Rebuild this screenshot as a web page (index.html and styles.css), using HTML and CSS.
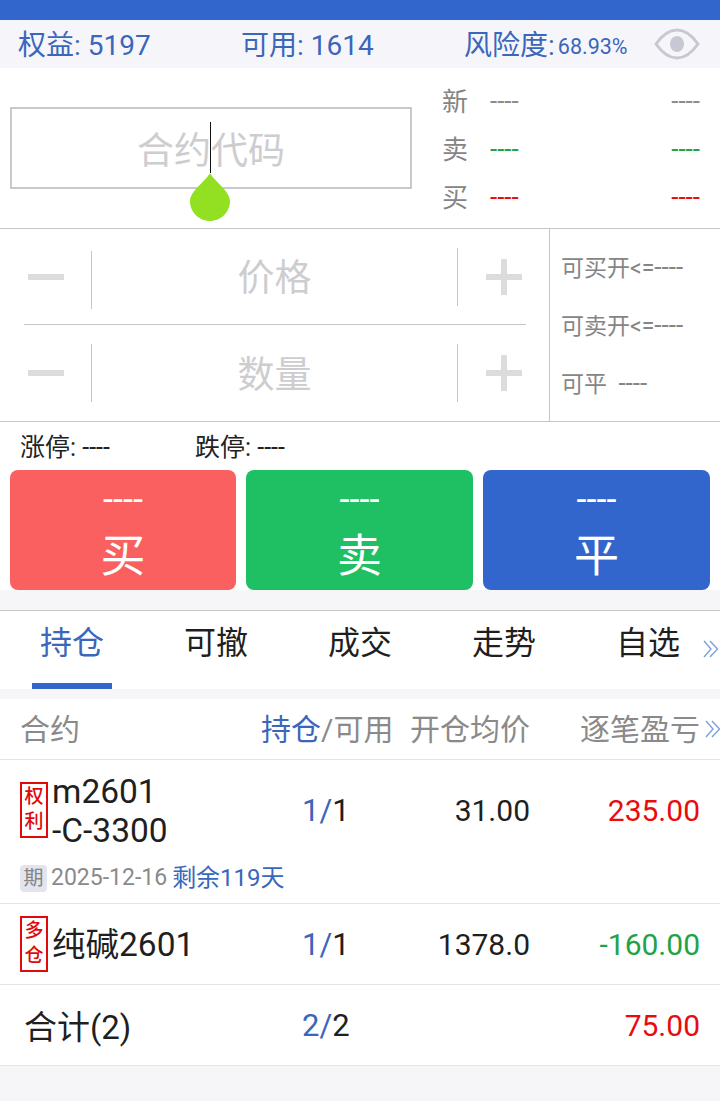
FILE: index.html
```html
<!DOCTYPE html>
<html lang="zh-CN">
<head>
    <meta charset="UTF-8">
    <title>交易</title>
    <link rel="stylesheet" href="styles.css">
</head>
<body>
    <div class="status-bar"></div>

    <div class="account-bar">
        <span class="acc-equity">权益: 5197</span>
        <span class="acc-free">可用: 1614</span>
        <span class="acc-risk">风险度:<small>68.93%</small></span>
        <svg class="eye" width="46" height="32" viewBox="0 0 46 32">
            <path d="M2 16 C9 6 15 2 23 2 C31 2 37 6 44 16 C37 26 31 30 23 30 C15 30 9 26 2 16 Z" fill="none" stroke="#c8c8d4" stroke-width="3"/>
            <ellipse cx="23" cy="16" rx="7" ry="8" fill="#c8c8d4"/>
        </svg>
    </div>

    <div class="quote-panel">
        <div class="code-wrap">
            <div class="code-box">合约代码</div>
            <div class="cursor"></div>
            <svg class="handle" width="40" height="48" viewBox="0 0 40 48">
                <path d="M20 0 C24 8 40 18 40 28 C40 39 31 48 20 48 C9 48 0 39 0 28 C0 18 16 8 20 0 Z" fill="#92e021"/>
            </svg>
        </div>
        <div class="quotes">
            <div class="quote-row"><span class="q-label">新</span><span class="q-val gray">----</span><span class="q-val gray">----</span></div>
            <div class="quote-row"><span class="q-label">卖</span><span class="q-val green">----</span><span class="q-val green">----</span></div>
            <div class="quote-row"><span class="q-label">买</span><span class="q-val red">----</span><span class="q-val red">----</span></div>
        </div>
    </div>

    <div class="order-panel">
        <div class="order-left">
            <div class="stepper first">
                <div class="step-btn"><span class="minus"></span></div>
                <div class="step-field">价格</div>
                <div class="step-btn"><span class="plus"></span></div>
            </div>
            <div class="stepper">
                <div class="step-btn"><span class="minus"></span></div>
                <div class="step-field">数量</div>
                <div class="step-btn"><span class="plus"></span></div>
            </div>
        </div>
        <div class="order-right">
            <div>可买开&lt;=<span class="dash">----</span></div>
            <div>可卖开&lt;=<span class="dash">----</span></div>
            <div>可平&nbsp; <span class="dash">----</span></div>
        </div>
    </div>

    <div class="limits">
        <span class="limit-up">涨停: ----</span>
        <span>跌停: ----</span>
    </div>

    <div class="actions">
        <div class="action buy"><span class="a-price">----</span><span class="a-name">买</span></div>
        <div class="action sell"><span class="a-price">----</span><span class="a-name">卖</span></div>
        <div class="action close"><span class="a-price">----</span><span class="a-name">平</span></div>
    </div>

    <div class="tabs">
        <div class="tab active">持仓</div>
        <div class="tab">可撤</div>
        <div class="tab">成交</div>
        <div class="tab">走势</div>
        <div class="tab">自选</div>
        <svg class="more" width="16" height="18" viewBox="0 0 16 18">
            <path d="M1 1 L8 9 L1 17 M7 1 L14.5 9 L7 17" fill="none" stroke="#7f9fdc" stroke-width="1.4"/>
        </svg>
    </div>

    <div class="table-head row-grid">
        <span class="col-name">合约</span>
        <span class="col-pos"><b>持仓</b>/可用</span>
        <span class="col-num">开仓均价</span>
        <span class="col-num">逐笔盈亏</span>
        <svg class="more head-more" width="16" height="18" viewBox="0 0 16 18">
            <path d="M1 1 L8 9 L1 17 M7 1 L14.5 9 L7 17" fill="none" stroke="#7f9fdc" stroke-width="1.4"/>
        </svg>
    </div>

    <div class="pos-row option-row">
        <div class="row-grid">
            <div class="name-cell">
                <span class="tag">权<br>利</span>
                <span class="name">m2601<br>-C-3300</span>
            </div>
            <span class="col-pos"><b>1/</b>1</span>
            <span class="col-num">31.00</span>
            <span class="col-num red">235.00</span>
        </div>
        <div class="expiry">
            <span class="qi">期</span>
            <span class="date">2025-12-16</span>
            <span class="left">剩余119天</span>
        </div>
    </div>

    <div class="pos-row plain-row row-grid">
        <div class="name-cell">
            <span class="tag">多<br>仓</span>
            <span class="name">纯碱2601</span>
        </div>
        <span class="col-pos"><b>1/</b>1</span>
        <span class="col-num">1378.0</span>
        <span class="col-num green">-160.00</span>
    </div>

    <div class="pos-row plain-row row-grid">
        <div class="name-cell total">合计(2)</div>
        <span class="col-pos"><b>2/</b>2</span>
        <span class="col-num"></span>
        <span class="col-num red">75.00</span>
    </div>
</body>
</html>
```

FILE: styles.css
```css
html, body {
    margin: 0;
    height: 100%;
}
body {
    font-family: Roboto, "Noto Sans CJK SC", sans-serif;
    background: #f6f6f8;
    color: #1f1f1f;
    width: 720px;
    height: 1101px;
    overflow: hidden;
}
.status-bar {
    height: 20px;
    background: #3366cc;
}

/* 账户信息 */
.account-bar {
    height: 46px;
    padding: 0 0 2px 18px;
    background: #f6f6fa;
    color: #3a66bb;
    font-size: 28px;
    display: flex;
    align-items: center;
    position: relative;
    white-space: nowrap;
}
.acc-equity { width: 223px; }
.acc-free { width: 223px; }
.acc-risk small {
    font-size: 21.5px;
    margin-left: 3px;
    vertical-align: 1px;
}
.eye { position: absolute; left: 654px; top: 8px; }

/* 合约代码 + 盘口 */
.quote-panel {
    height: 160px;
    background: #fff;
    border-bottom: 1px solid #c4c6ca;
    display: flex;
}
.code-wrap {
    width: 442px;
    padding: 39px 0 0 10px;
    box-sizing: border-box;
    position: relative;
}
.code-box {
    width: 402px;
    height: 82px;
    box-sizing: border-box;
    border: 2px solid #c8c9cc;
    color: #cdcdd0;
    font-size: 37px;
    line-height: 86px;
    text-align: center;
}
.cursor {
    position: absolute;
    left: 210px;
    top: 54px;
    width: 1px;
    height: 51px;
    background: #111;
}
.handle {
    position: absolute;
    left: 190px;
    top: 105px;
}
.quotes {
    flex: 1;
    padding: 7px 20px 0 0;
}
.quote-row {
    height: 48px;
    display: flex;
    align-items: center;
    font-size: 26px;
}
.q-label {
    color: #858585;
    width: 48px;
}
.q-val {
    font-size: 26px;
    flex: 1;
    padding-top: 3px;
}
.q-val + .q-val { text-align: right; }
.gray { color: #8c8c8c; }
.green { color: #1fa345; }
.red { color: #e80c0c; }

/* 价格 数量 */
.order-panel {
    height: 192px;
    background: #fff;
    border-bottom: 1px solid #c4c6ca;
    display: flex;
}
.order-left {
    width: 549px;
    padding: 0 23px 0 24px;
    box-sizing: border-box;
}
.stepper {
    height: 96px;
    display: flex;
    align-items: center;
}
.stepper.first {
    height: 95px;
    border-bottom: 1px solid #c4c6ca;
}
.step-btn {
    height: 58px;
    box-sizing: border-box;
    display: flex;
    align-items: center;
}
.step-btn:first-child {
    padding-left: 4px;
    width: 68px;
    border-right: 1px solid #c4c6ca;
}
.step-btn:last-child {
    width: 69px;
    border-left: 1px solid #c4c6ca;
    padding-left: 28px;
}
.first .step-btn:first-child {
    margin-top: 6px;
}
.first .minus {
    margin-bottom: 6px;
}
.first .step-btn:last-child {
    margin-top: 1px;
}
.step-field {
    flex: 1;
    text-align: center;
    color: #cdcdd0;
    font-size: 37px;
    line-height: 50px;
    padding-top: 6px;
}
.first .step-field {
    padding-top: 4px;
}
.minus, .plus {
    display: block;
    width: 36px;
    height: 6px;
    background: #dcdcdc;
    position: relative;
}
.plus::after {
    content: "";
    position: absolute;
    left: 15px;
    top: -15px;
    width: 6px;
    height: 36px;
    background: #dcdcdc;
}
.order-right {
    flex: 1;
    border-left: 1px solid #c4c6ca;
    padding: 10px 0 13px 11px;
    display: flex;
    flex-direction: column;
    justify-content: space-between;
    color: #858585;
    font-size: 23px;
    line-height: 56px;
    white-space: nowrap;
}
.dash { font-size: 26px; }

/* 涨跌停 */
.limits {
    height: 46px;
    background: #fff;
    font-size: 25px;
    color: #222;
    display: flex;
    align-items: center;
    padding: 0 0 2px 20px;
}
.limit-up { width: 175px; }

/* 买卖平 */
.actions {
    height: 120px;
    background: #fff;
    padding: 0 10px;
    display: flex;
    gap: 10px;
}
.action {
    flex: 1;
    border-radius: 8px;
    color: #fff;
    display: flex;
    flex-direction: column;
    align-items: center;
}
.buy { flex: none; width: 226px; background: #fa6060; }
.sell { background: #1fc063; }
.close { background: #3366cc; }
.a-price {
    font-size: 36px;
    line-height: 30px;
    margin-top: 15px;
}
.a-name {
    font-size: 45px;
    line-height: 60px;
    margin-top: 12px;
}

/* tab */
.tabs {
    margin-top: 20px;
    height: 78px;
    background: #fff;
    border-top: 1px solid #c8c9cc;
    display: flex;
    position: relative;
}
.tab {
    width: 144px;
    text-align: center;
    font-size: 32px;
    line-height: 64px;
    box-sizing: border-box;
    color: #1f1f1f;
}
.tab.active {
    color: #3a66bb;
    position: relative;
}
.tab.active::after {
    content: "";
    position: absolute;
    left: 32px;
    bottom: 0;
    width: 80px;
    height: 6px;
    background: #3366cc;
}
.more {
    position: absolute;
    left: 703px;
    top: 29px;
}

/* 持仓表 */
.row-grid {
    display: grid;
    grid-template-columns: 260px 131px 139px 170px;
    align-items: center;
}
.table-head {
    margin-top: 10px;
    height: 56px;
    padding-bottom: 4px;
    background: #fff;
    border-bottom: 1px solid #e4e4e6;
    color: #8a8a8a;
    font-size: 30px;
    position: relative;
    white-space: nowrap;
}
.col-name { padding-left: 20px; }
.col-pos { text-align: left; font-size: 31px; padding-left: 42px; }
.table-head .col-pos { font-size: 30px; padding-left: 1px; }
.col-pos b { font-weight: 400; color: #3a66bb; }
.col-num { text-align: right; font-size: 30px; }
.head-more { left: 705px; top: 21px; }
.pos-row {
    background: #fff;
    border-bottom: 1px solid #e4e4e6;
}
.option-row { height: 143px; }
.option-row .row-grid { padding-top: 12px; }
.option-row .col-pos,
.option-row .col-num { margin-bottom: 2px; }
.option-row .tag { margin-bottom: 2px; }
.plain-row { height: 80px; }
.name-cell {
    display: flex;
    align-items: center;
    padding-left: 20px;
}
.tag {
    width: 28px;
    height: 56px;
    box-sizing: border-box;
    border: 2px solid #e00a0a;
    color: #e00a0a;
    font-size: 19px;
    font-weight: 500;
    line-height: 25px;
    text-align: center;
    margin-right: 4px;
    flex: none;
}
.name {
    font-size: 33.5px;
    line-height: 39px;
}
.total {
    font-size: 33px;
    padding-left: 24px;
}
.expiry {
    display: flex;
    align-items: center;
    padding: 14px 0 0 20px;
    font-size: 24px;
    line-height: 28px;
}
.qi {
    width: 27px;
    height: 27px;
    border-radius: 4px;
    background: #e2e4ee;
    color: #858585;
    font-size: 20px;
    line-height: 27px;
    text-align: center;
    margin-right: 4px;
}
.date {
    font-size: 23px;
    color: #8a8a8a;
    margin-right: 5px;
}
.left { color: #3a66bb; }
```
